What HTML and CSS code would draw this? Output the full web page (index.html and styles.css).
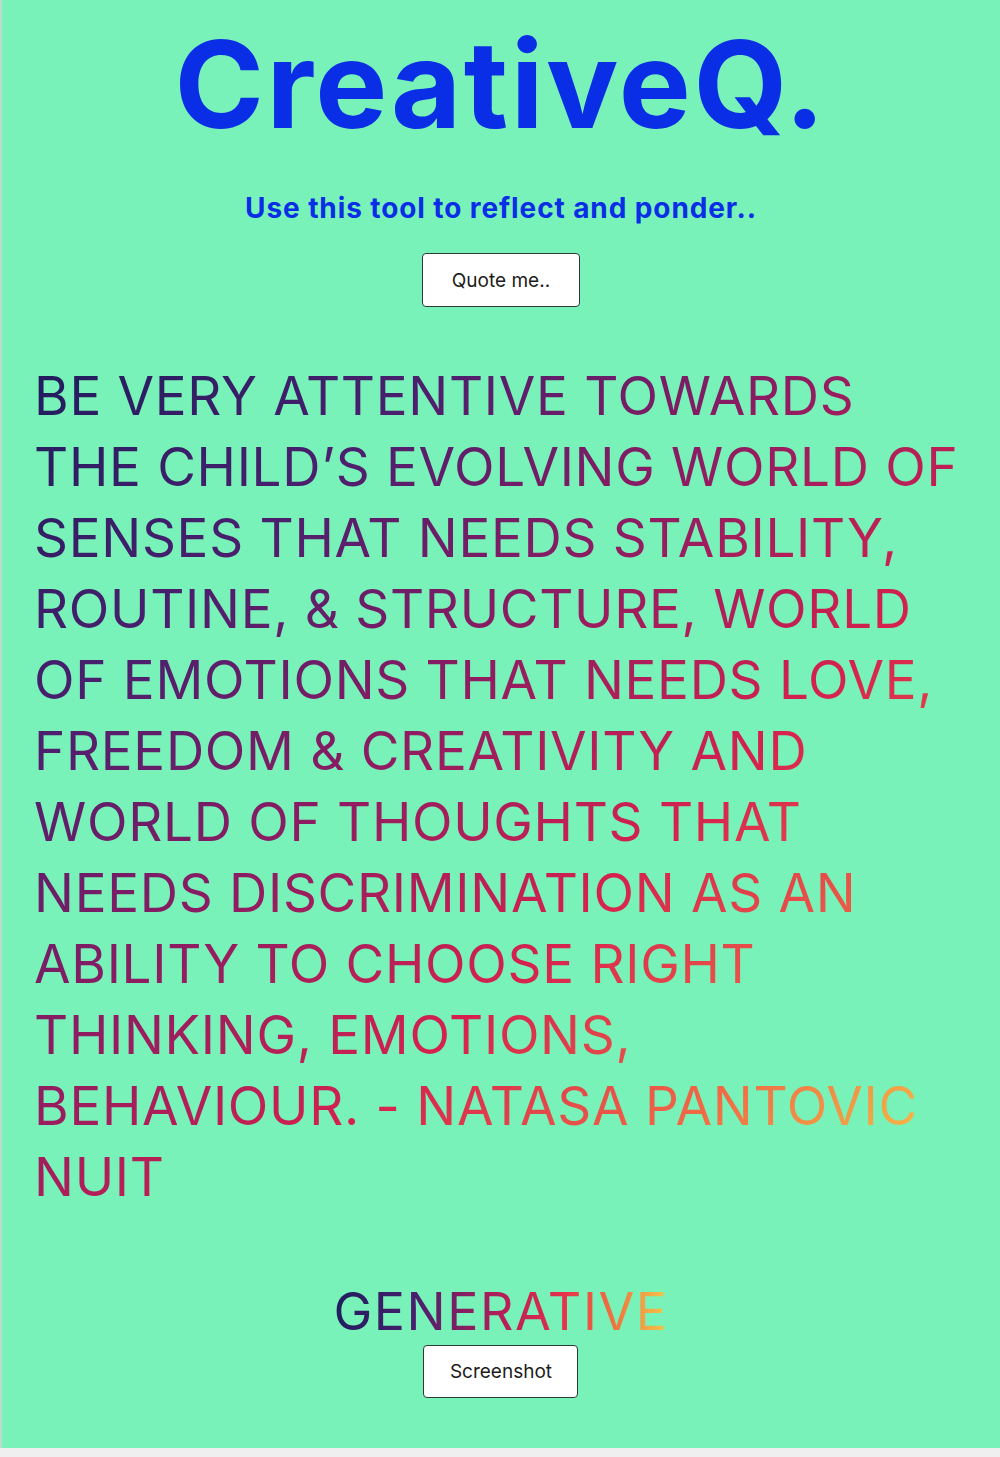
FILE: index.html
```html
<!DOCTYPE html>
<html lang="en">
<head>
<meta charset="utf-8">
<title>CreativeQ.</title>
<link rel="stylesheet" href="styles.css">
</head>
<body>
<main class="page">
  <header class="header">
    <h1 class="brand">CreativeQ.</h1>
    <p class="tagline">Use this tool to reflect and ponder..</p>
    <button class="btn btn-quote">Quote me..</button>
  </header>
  <section class="quote-wrap">
    <p class="quote">Be very attentive towards the child’s evolving world of senses that needs stability, routine, &amp; structure, world of emotions that needs love, freedom &amp; creativity and world of thoughts that needs discrimination as an ability to choose right thinking, emotions, behaviour. - Natasa Pantovic Nuit</p>
  </section>
  <footer class="footer">
    <h2 class="generative">GENERATIVE</h2>
    <button class="btn btn-shot">Screenshot</button>
  </footer>
</main>
</body>
</html>
```

FILE: styles.css
```css
html, body {
  margin: 0;
  padding: 0;
}
body {
  background: #efefef;
  font-family: "Inter", "Liberation Sans", sans-serif;
}
.page {
  box-sizing: border-box;
  height: 1448px;
  background: #78f2b9;
  border-left: 2px solid #b9dccb;
  display: flex;
  flex-direction: column;
  align-items: center;
}
.header {
  display: flex;
  flex-direction: column;
  align-items: center;
}
.brand {
  margin: 14px 0 0;
  font-family: "Inter", sans-serif;
  font-weight: 700;
  font-size: 121px;
  line-height: 140px;
  letter-spacing: 2.5px;
  color: #0a2ee6;
}
.tagline {
  margin: 37px 0 0;
  font-family: "Inter", sans-serif;
  font-weight: 700;
  font-size: 28px;
  line-height: 34px;
  letter-spacing: 0.9px;
  color: #0a2ee6;
}
.btn {
  background: #ffffff;
  border: 1px solid #2b3a35;
  border-radius: 4px;
  font-family: "Inter", sans-serif;
  font-size: 19px;
  color: #1c1c1c;
  padding: 0;
}
.btn-quote {
  margin-top: 28px;
  width: 158px;
  height: 54px;
}
.quote-wrap {
  align-self: stretch;
  padding: 0 40px 0 32px;
  margin-top: 54px;
}
.quote {
  margin: 0;
  text-transform: uppercase;
  font-family: "Inter", sans-serif;
  font-weight: 400;
  font-size: 53px;
  line-height: 71px;
  letter-spacing: 0.7px;
  background: linear-gradient(to bottom right, #1f1d5e 0%, #4a1f6e 22%, #8e1c62 42%, #d6214f 62%, #f06a45 80%, #f4c447 95%);
  -webkit-background-clip: text;
  background-clip: text;
  color: transparent;
}
.footer {
  margin-top: auto;
  margin-bottom: 50px;
  display: flex;
  flex-direction: column;
  align-items: center;
}
.generative {
  margin: 0;
  font-family: "Inter", sans-serif;
  font-weight: 400;
  font-size: 52px;
  line-height: 56px;
  letter-spacing: 1.5px;
  background: linear-gradient(to right, #1f1d5e 0%, #4a1f6e 25%, #b41e58 50%, #e4304c 68%, #f07a3e 85%, #f4c94a 100%);
  -webkit-background-clip: text;
  background-clip: text;
  color: transparent;
}
.btn-shot {
  margin-top: 5px;
  width: 155px;
  height: 53px;
}
```
